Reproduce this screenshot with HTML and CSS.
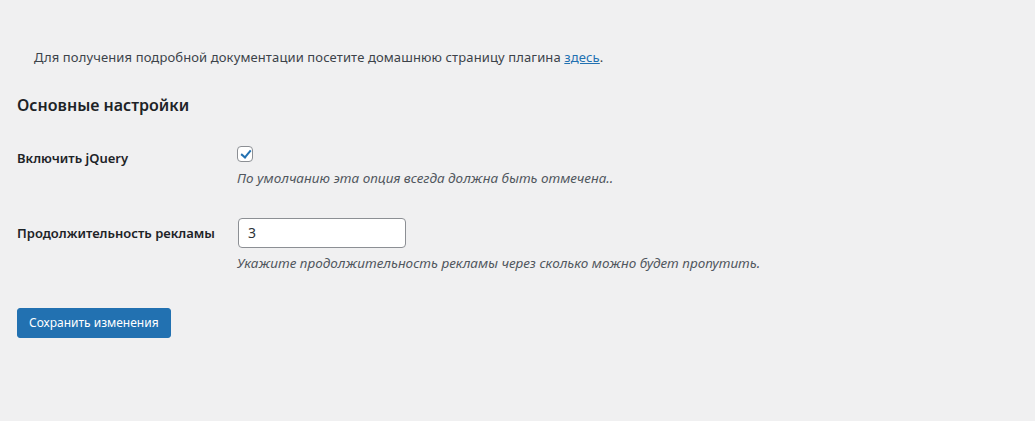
FILE: index.html
```html
<!DOCTYPE html>
<html lang="ru">
<head>
<meta charset="utf-8">
<title>Настройки плагина</title>
<link rel="stylesheet" href="styles.css">
</head>
<body>
<div class="wrap">
  <p class="intro">Для получения подробной документации посетите домашнюю страницу плагина <a href="#">здесь</a>.</p>
  <h2 class="section-title">Основные настройки</h2>
  <form class="form-table">
    <div class="form-row">
      <div class="form-th"><label for="enable-jquery">Включить jQuery</label></div>
      <div class="form-td">
        <label class="check-line">
          <input type="checkbox" id="enable-jquery" class="checkbox" checked>
        </label>
        <p class="description">По умолчанию эта опция всегда должна быть отмечена..</p>
      </div>
    </div>
    <div class="form-row">
      <div class="form-th"><label for="ad-duration">Продолжительность рекламы</label></div>
      <div class="form-td">
        <input type="text" id="ad-duration" class="text-input" value="3">
        <p class="description">Укажите продолжительность рекламы через сколько можно будет пропутить.</p>
      </div>
    </div>
    <div class="submit">
      <button type="button" class="button-primary">Сохранить изменения</button>
    </div>
  </form>
</div>
</body>
</html>
```

FILE: styles.css
```css
html, body {
  margin: 0;
  padding: 0;
  background: #f0f0f1;
}

body {
  font-family: "Noto Sans", "Open Sans", sans-serif;
  font-size: 13px;
  line-height: 1.5;
  color: #3c434a;
}

.wrap {
  padding: 0 17px;
}

.intro {
  margin: 48px 0 0 17px;
  letter-spacing: 0.12px;
}

.intro a {
  color: #2271b1;
  text-decoration: underline;
}

.section-title {
  margin: 26px 0 12px;
  font-size: 16px;
  line-height: 22px;
  font-weight: 600;
  color: #1d2327;
}

.form-table {
  margin: 0;
}

.form-row {
  display: grid;
  grid-template-columns: 210px 1fr;
}

.form-th {
  padding: 21px 10px 20px 0;
  font-size: 13px;
  line-height: 18px;
  font-weight: 600;
  color: #1d2327;
  white-space: nowrap;
}

.form-td {
  padding: 15px 10px;
}

/* checkbox line box is a little taller than the box itself */
.check-line {
  display: block;
  height: 20px;
}

.checkbox {
  appearance: none;
  -webkit-appearance: none;
  margin: 3px 0 0;
  width: 16px;
  height: 16px;
  border: 1px solid #8c8f94;
  border-radius: 4px;
  background: #fff;
  box-sizing: border-box;
  display: block;
  position: relative;
}

.checkbox:checked::before {
  content: "";
  position: absolute;
  left: 4.5px;
  top: 1px;
  width: 4px;
  height: 8px;
  border: solid #2271b1;
  border-width: 0 2.5px 2.5px 0;
  transform: rotate(40deg);
}

.description {
  margin: 3px 0 0;
  font-size: 13.5px;
  line-height: 19px;
  font-style: italic;
  color: #50575e;
}

.text-input {
  display: block;
  box-sizing: border-box;
  margin: 0 0 0 1px;
  width: 168px;
  height: 30px;
  padding: 0 9px;
  border: 1px solid #8c8f94;
  border-radius: 4px;
  background: #fff;
  font-family: inherit;
  font-size: 14px;
  color: #2c3338;
}

.text-input + .description {
  margin-top: 6px;
}

.submit {
  padding-top: 20px;
}

.button-primary {
  height: 30px;
  padding: 0 11px;
  border: 1px solid #2271b1;
  border-radius: 3px;
  background: #2271b1;
  color: #fff;
  font-family: inherit;
  font-size: 12px;
  line-height: 28px;
}
```
